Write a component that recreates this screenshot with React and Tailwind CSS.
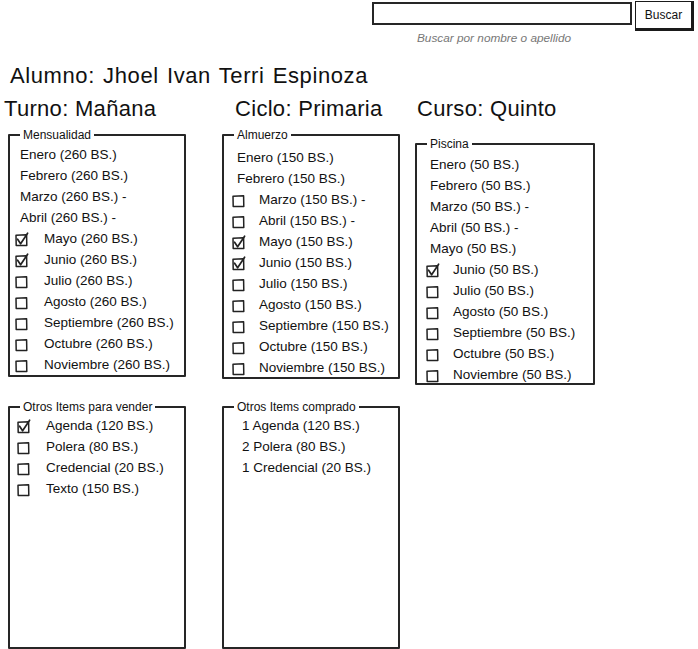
import React from "react";

function Box({ checked }) {
  return (
    <svg width="14" height="14" viewBox="0 0 14 14" className="shrink-0 overflow-visible">
      <path d="M1 2.2 L11.6 1.8 L11.8 12.4 L1.2 12.6 Z" fill="none" stroke="#222" strokeWidth="1.5" strokeLinejoin="round" />
      {checked && (
        <path d="M2.6 6.2 L5.6 10.8 L12.6 0.2" fill="none" stroke="#222" strokeWidth="1.7" strokeLinecap="round" strokeLinejoin="round" />
      )}
    </svg>
  );
}

function Row({ text, cb, checked, plainPl, cbPl, gap }) {
  if (cb) {
    return (
      <div className={`h-[21px] flex items-center ${cbPl}`}>
        <Box checked={checked} />
        <span className={gap}>{text}</span>
      </div>
    );
  }
  return (
    <div className={`h-[21px] flex items-center ${plainPl}`}>
      <span>{text}</span>
    </div>
  );
}

function Panel({ title, width, height, pt, children }) {
  return (
    <fieldset className={`border-2 border-[#262626] ${width} ${height} ${pt} rounded-[1px]`}>
      <legend className="ml-[10px] px-[3px] text-[12px] leading-[14px]">{title}</legend>
      {children}
    </fieldset>
  );
}

export default function App() {
  const months = ["Enero", "Febrero", "Marzo", "Abril", "Mayo", "Junio", "Julio", "Agosto", "Septiembre", "Octubre", "Noviembre"];
  const suffix = (i) => (i === 2 || i === 3 ? " -" : "");

  return (
    <div className="w-[698px] h-[649px] bg-white text-[#111] font-['Liberation_Sans',Arial,sans-serif] text-[13.5px] overflow-hidden">
      <div className="flex items-start pt-[2px] pl-[372px]">
        <div className="w-[260px] h-[23px] border-2 border-[#262626]"></div>
        <button className="ml-[3px] w-[59px] h-[30px] border-[1.5px] border-r-[3px] border-b-[3px] border-[#1a1a1a] bg-white text-[12px] flex items-center justify-center -mt-[1px]">
          Buscar
        </button>
      </div>
      <div className="pl-[417px] mt-[0px] text-[11.8px] italic text-[#777] leading-[14px]">Buscar por nombre o apellido</div>

      <div className="pl-[10px] mt-[19px] text-[22px] leading-[24px] tracking-[0.6px] [word-spacing:1.5px]">Alumno: Jhoel Ivan Terri Espinoza</div>

      <div className="flex mt-[9px]">
        <div className="w-[218px] pl-[4px]">
          <div className="text-[22px] leading-[24px] tracking-[0.3px]">Turno: Mañana</div>
          <div className="pl-[4px] mt-[7px]">
            <Panel title="Mensualidad" width="w-[178px]" height="h-[249px]" pt="pt-[3px]">
              {months.map((m, i) => (
                <Row
                  key={m}
                  text={`${m} (260 BS.)${suffix(i)}`}
                  cb={i >= 4}
                  checked={i === 4 || i === 5}
                  plainPl="pl-[10px]"
                  cbPl="pl-[5px]"
                  gap="ml-[15px]"
                />
              ))}
            </Panel>
          </div>
        </div>
        <div className="w-[197px] pl-[4px]">
          <div className="pl-[13px] text-[22px] leading-[24px] tracking-[0.3px]">Ciclo: Primaria</div>
          <div className="mt-[7px]">
            <Panel title="Almuerzo" width="w-[178px]" height="h-[251px]" pt="pt-[6px]">
              {months.map((m, i) => (
                <Row
                  key={m}
                  text={`${m} (150 BS.)${suffix(i)}`}
                  cb={i >= 2}
                  checked={i === 4 || i === 5}
                  plainPl="pl-[13px]"
                  cbPl="pl-[8px]"
                  gap="ml-[13px]"
                />
              ))}
            </Panel>
          </div>
        </div>
        <div className="w-[279px]">
          <div className="pl-[2px] text-[22px] leading-[24px] tracking-[0.3px]">Curso: Quinto</div>
          <div className="mt-[16px]">
            <Panel title="Piscina" width="w-[180px]" height="h-[248px]" pt="pt-[4px]">
              {months.map((m, i) => (
                <Row
                  key={m}
                  text={`${m} (50 BS.)${suffix(i)}`}
                  cb={i >= 5}
                  checked={i === 5}
                  plainPl="pl-[13px]"
                  cbPl="pl-[9px]"
                  gap="ml-[13px]"
                />
              ))}
            </Panel>
          </div>
        </div>
      </div>

      <div className="flex pl-[8px] mt-[15px]">
        <Panel title="Otros Items para vender" width="w-[178px]" height="h-[249px]" pt="pt-[2px]">
          {["Agenda (120 BS.)", "Polera (80 BS.)", "Credencial (20 BS.)", "Texto (150 BS.)"].map((t, i) => (
            <Row key={t} text={t} cb checked={i === 0} cbPl="pl-[7px]" gap="ml-[15px]" />
          ))}
        </Panel>
        <div className="ml-[36px]">
          <Panel title="Otros Items comprado" width="w-[178px]" height="h-[249px]" pt="pt-[2px]">
            {["1 Agenda (120 BS.)", "2 Polera (80 BS.)", "1 Credencial (20 BS.)"].map((t) => (
              <Row key={t} text={t} plainPl="pl-[18px]" />
            ))}
          </Panel>
        </div>
      </div>
    </div>
  );
}
